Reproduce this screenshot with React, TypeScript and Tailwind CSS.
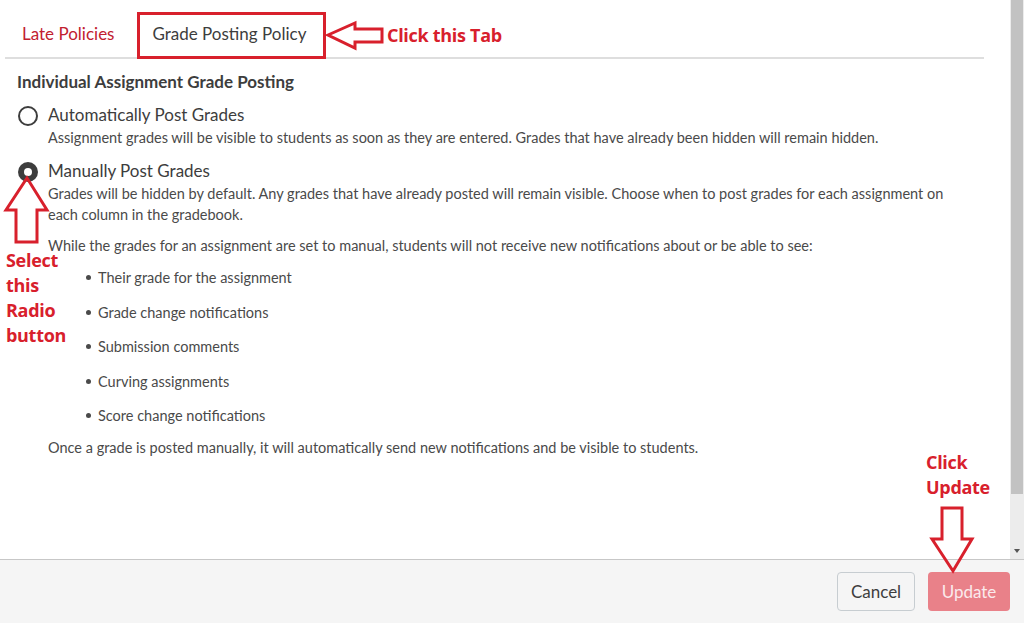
import type { FC } from 'react';

const bullets = [
  'Their grade for the assignment',
  'Grade change notifications',
  'Submission comments',
  'Curving assignments',
  'Score change notifications',
];

const Radio: FC<{ checked?: boolean }> = ({ checked }) =>
  checked ? (
    <span className="mt-[3px] flex h-[20px] w-[20px] shrink-0 items-center justify-center rounded-full bg-[#3d3d3d]">
      <span className="h-[8px] w-[8px] rounded-full bg-white" />
    </span>
  ) : (
    <span className="mt-[3px] h-[20px] w-[20px] shrink-0 rounded-full border-2 border-[#3d3d3d] bg-white" />
  );

const App: FC = () => {
  return (
    <div className="relative flex h-[623px] w-[1024px] flex-col overflow-hidden bg-white font-['Lato',sans-serif] text-[#4a4a4a]">
      <div className="flex min-h-0 flex-1">
        <div className="flex-1 pl-[5px] pr-[26px]">
          {/* Tabs */}
          <div className="flex h-[59px] items-end border-b-2 border-[#dedede]">
            <div className="flex h-[46px] items-center px-[17px] text-[17px] text-[#c1202f]">Late Policies</div>
            <div className="ml-[5px] flex h-[46px] items-center px-[16px] text-[17px] text-[#3d3d3d]">Grade Posting Policy</div>
          </div>

          <div className="pl-[12px] pt-[12px]">
            <h2 className="text-[17px] font-bold leading-[22px] text-[#3d3d3d]">Individual Assignment Grade Posting</h2>

            <div className="mt-[10px] flex gap-[10px] pl-[1px]">
              <Radio />
              <div>
                <div className="text-[17px] leading-[24px] text-[#3d3d3d]">Automatically Post Grades</div>
                <p className="text-[14.5px] leading-[21px]">
                  Assignment grades will be visible to students as soon as they are entered. Grades that have already been hidden will remain hidden.
                </p>
              </div>
            </div>

            <div className="mt-[11px] flex gap-[10px] pl-[1px]">
              <Radio checked />
              <div className="pr-[20px]">
                <div className="text-[17px] leading-[24px] text-[#3d3d3d]">Manually Post Grades</div>
                <p className="text-[14.5px] leading-[21px]">
                  Grades will be hidden by default. Any grades that have already posted will remain visible. Choose when to post grades for each assignment on each column in the gradebook.
                </p>
                <p className="mt-[10px] text-[14.5px] leading-[21px]">
                  While the grades for an assignment are set to manual, students will not receive new notifications about or be able to see:
                </p>
                <ul className="mt-[11px] flex flex-col gap-[13.5px] pl-[38px]">
                  {bullets.map((b) => (
                    <li key={b} className="flex items-center text-[14.5px] leading-[21px]">
                      <span className="mr-[7px] h-[5px] w-[5px] rounded-full bg-[#4a4a4a]" />
                      {b}
                    </li>
                  ))}
                </ul>
                <p className="mt-[11px] text-[14.5px] leading-[21px]">
                  Once a grade is posted manually, it will automatically send new notifications and be visible to students.
                </p>
              </div>
            </div>
          </div>
        </div>

        {/* Scrollbar */}
        <div className="relative w-[14px] bg-[#ececec]">
          <div className="mx-auto h-[494px] w-[12px] bg-[#c2c2c2]" />
          <div className="absolute bottom-[6px] left-[4px] h-0 w-0 border-x-[3px] border-t-[4px] border-x-transparent border-t-[#555]" />
        </div>
      </div>

      {/* Footer */}
      <div className="flex h-[64px] items-center justify-end gap-[13px] border-t border-[#c7c7c7] bg-[#f5f5f5] pr-[14px]">
        <button className="h-[39px] w-[78px] rounded-[4px] border border-[#c7cdd1] bg-[#f5f5f5] text-[17px] text-[#3d3d3d]">Cancel</button>
        <button className="h-[39px] w-[82px] rounded-[4px] bg-[#e98189] text-[17px] text-[#fbeaec]">Update</button>
      </div>

      {/* Annotations */}
      <div className="absolute left-[137px] top-[12px] h-[47px] w-[189px] border-[3px] border-[#d8202c]" />
      <svg className="absolute left-[324px] top-[20px]" width="64" height="32" viewBox="0 0 64 32">
        <polygon points="4,15 31,3 31,9 58,9 58,22 31,22 31,28" fill="none" stroke="#d8202c" strokeWidth="3" strokeLinejoin="miter" />
      </svg>
      <div className="absolute left-[387px] top-[22px] font-['Open_Sans',sans-serif] text-[18px] font-bold leading-[26px] tracking-[-0.3px] text-[#d8202c]">Click this Tab</div>

      <svg className="absolute left-[2px] top-[174px]" width="50" height="72" viewBox="0 0 50 72">
        <polygon points="25,4 45,36 35,36 35,68 14,68 14,36 4,36" fill="none" stroke="#d8202c" strokeWidth="3" />
      </svg>
      <div className="absolute left-[6px] top-[248px] font-['Open_Sans',sans-serif] text-[18px] font-bold leading-[25px] tracking-[-0.3px] text-[#d8202c]">
        Select
        <br />
        this
        <br />
        Radio
        <br />
        button
      </div>

      <div className="absolute left-[926px] top-[450px] font-['Open_Sans',sans-serif] text-[18px] font-bold leading-[25px] tracking-[-0.3px] text-[#d8202c]">
        Click
        <br />
        Update
      </div>
      <svg className="absolute left-[928px] top-[505px]" width="50" height="72" viewBox="0 0 50 72">
        <polygon points="14,3 34,3 34,34 44,34 25,66 4,34 14,34" fill="none" stroke="#d8202c" strokeWidth="3" />
      </svg>
    </div>
  );
};

export default App;
